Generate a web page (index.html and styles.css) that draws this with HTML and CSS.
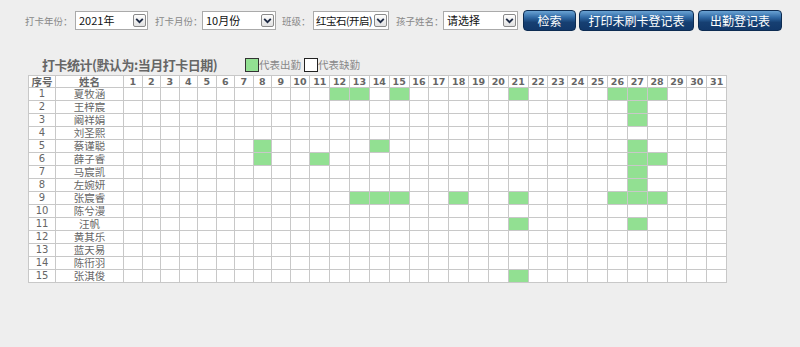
FILE: index.html
```html
<!DOCTYPE html>
<html lang="zh-CN">
<head>
  <meta charset="UTF-8" />
  <meta name="viewport" content="width=device-width, initial-scale=1.0"/>
  <title>打卡统计</title>
  <link rel="stylesheet" href="styles.css">
</head>
<body>
  <div class="toolbar">
    <label class="lbl lbl-year">打卡年份：</label>
    <div class="sel sel-year"><span>2021年</span><i class="arr"><svg viewBox="0 0 10 10"><path d="M2 3.5 L5 6.5 L8 3.5" /></svg></i></div>
    <label class="lbl lbl-month">打卡月份：</label>
    <div class="sel sel-month"><span>10月份</span><i class="arr"><svg viewBox="0 0 10 10"><path d="M2 3.5 L5 6.5 L8 3.5" /></svg></i></div>
    <label class="lbl lbl-class">班级：</label>
    <div class="sel sel-class"><span>红宝石(开启)</span><i class="arr"><svg viewBox="0 0 10 10"><path d="M2 3.5 L5 6.5 L8 3.5" /></svg></i></div>
    <label class="lbl lbl-kid">孩子姓名：</label>
    <div class="sel sel-kid"><span>请选择</span><i class="arr"><svg viewBox="0 0 10 10"><path d="M2 3.5 L5 6.5 L8 3.5" /></svg></i></div>
    <button class="btn btn-search">检索</button>
    <button class="btn btn-print">打印未刷卡登记表</button>
    <button class="btn btn-att">出勤登记表</button>
  </div>

  <section class="stats">
    <div class="stats-head">
      <h2>打卡统计(默认为:当月打卡日期)</h2>
      <span class="legend"><i class="box on"></i>代表出勤</span>
      <span class="legend"><i class="box off"></i>代表缺勤</span>
    </div>
    <table class="grid">
      <colgroup id="cols"></colgroup>
      <thead><tr id="head"></tr></thead>
      <tbody id="rows"></tbody>
    </table>
  </section>

  <script>
    const kids = [
      { name: "夏牧涵", days: [12, 13, 15, 21, 26, 27, 28] },
      { name: "王梓宸", days: [27] },
      { name: "阚祥娟", days: [27] },
      { name: "刘圣熙", days: [] },
      { name: "蔡谨聪", days: [8, 14, 27] },
      { name: "薛子睿", days: [8, 11, 27, 28] },
      { name: "马宸凯", days: [27] },
      { name: "左婉妍", days: [27] },
      { name: "张宸睿", days: [13, 14, 15, 18, 21, 26, 27, 28] },
      { name: "陈兮漫", days: [] },
      { name: "汪帆", days: [21, 27] },
      { name: "黄其乐", days: [] },
      { name: "蓝天易", days: [] },
      { name: "陈衎羽", days: [] },
      { name: "张淇俊", days: [21] }
    ];

    const cols = document.getElementById("cols");
    const head = document.getElementById("head");
    let colHtml = '<col class="c-no"><col class="c-name">';
    let headHtml = "<th>序号</th><th>姓名</th>";
    for (let d = 1; d <= 31; d++) {
      colHtml += `<col class="${d < 10 ? "c-day1" : "c-day2"}">`;
      headHtml += `<th class="day">${d}</th>`;
    }
    cols.innerHTML = colHtml;
    head.innerHTML = headHtml;

    const rows = document.getElementById("rows");
    kids.forEach((k, i) => {
      let tr = `<td class="no">${i + 1}</td><td class="name">${k.name}</td>`;
      for (let d = 1; d <= 31; d++) {
        tr += `<td class="${k.days.includes(d) ? "on" : ""}"></td>`;
      }
      rows.innerHTML += `<tr>${tr}</tr>`;
    });
  </script>
</body>
</html>
```

FILE: styles.css
```css
* {
  margin: 0;
  padding: 0;
  box-sizing: border-box;
}
body {
  font-family: "Noto Sans CJK SC", "DejaVu Sans", sans-serif;
  background: #eeeeee;
  color: #555;
}
.toolbar {
  display: flex;
  align-items: center;
  padding: 10px 0 0 25px;
  height: 31px;
}
.lbl {
  font-size: 9.5px;
  color: #888;
  white-space: nowrap;
}
.lbl-year { width: 50px; }
.lbl-month { width: 47px; margin-left: 7px; }
.lbl-class { width: 31px; margin-left: 6px; }
.lbl-kid { width: 47px; margin-left: 7px; }
.sel {
  position: relative;
  height: 19px;
  background: #fff;
  border: 1px solid #aaa;
  font-size: 11px;
  color: #111;
  line-height: 17px;
  padding-left: 3px;
  white-space: nowrap;
}
.sel-year { width: 73px; }
.sel-month { width: 74px; }
.sel-class {
  width: 76px;
  padding-left: 2px;
  font-size: 10.5px;
  letter-spacing: -0.5px;
}
.sel-kid { width: 75px; }
.arr {
  position: absolute;
  right: 1px;
  top: 2px;
  width: 13px;
  height: 13px;
  border: 1px solid #8a8a8a;
  border-radius: 2px;
  background: linear-gradient(#fdfdfd, #e2e2e2);
}
.arr svg {
  display: block;
  width: 11px;
  height: 11px;
  fill: none;
  stroke: #1d2a44;
  stroke-width: 1.7;
}
.btn {
  height: 21px;
  margin-left: 4px;
  border: 1px solid #0d2c52;
  border-radius: 4px;
  background: linear-gradient(#6aa3d4 0%, #2f68a3 35%, #163f72 60%, #12386a 100%);
  color: #fff;
  font-family: "Noto Sans CJK SC", sans-serif;
  font-size: 12px;
}
.btn-search { width: 53px; margin-left: 5px; }
.btn-print { width: 115px; margin-left: 3px; }
.btn-att { width: 84px; }

.stats {
  padding: 23px 0 0 28px;
}
.stats-head {
  display: flex;
  align-items: flex-end;
  height: 19px;
  padding-left: 14px;
}
.stats-head h2 {
  font-size: 13px;
  font-weight: bold;
  letter-spacing: -0.5px;
  color: #666;
  width: 203px;
  line-height: 17px;
}
.legend {
  display: flex;
  align-items: center;
  font-size: 10.5px;
  color: #888;
  margin-right: 3px;
  line-height: 16px;
}
.box {
  width: 14px;
  height: 14px;
  border: 1px solid #222;
}
.box.on { background: #92e092; border-color: #333; }
.box.off { background: #fff; }

.grid {
  margin-top: 2px;
  width: 699px;
  table-layout: fixed;
  border-collapse: collapse;
  background: #fff;
}
.c-no { width: 27px; }
.c-name { width: 68px; }
.c-day1 { width: 18.5px; }
.c-day2 { width: 19.85px; }
.grid th,
.grid td {
  border: 1px solid #c8c8c8;
  text-align: center;
  padding: 0;
  white-space: nowrap;
  overflow: hidden;
}
.grid th {
  height: 12px;
  font-size: 10.5px;
  line-height: 11px;
  font-weight: bold;
  color: #666;
}
.grid th.day {
  font-family: "DejaVu Sans", sans-serif;
  font-size: 9.5px;
}
.grid td {
  height: 13px;
  font-size: 10.5px;
  line-height: 12px;
  color: #666;
}
.grid td.no {
  font-family: "DejaVu Sans", sans-serif;
  font-size: 10px;
}
.grid td.name {
  font-family: "DejaVu Sans", "Noto Sans CJK SC", sans-serif;
}
.grid td.on {
  background: #92e092;
}
```
